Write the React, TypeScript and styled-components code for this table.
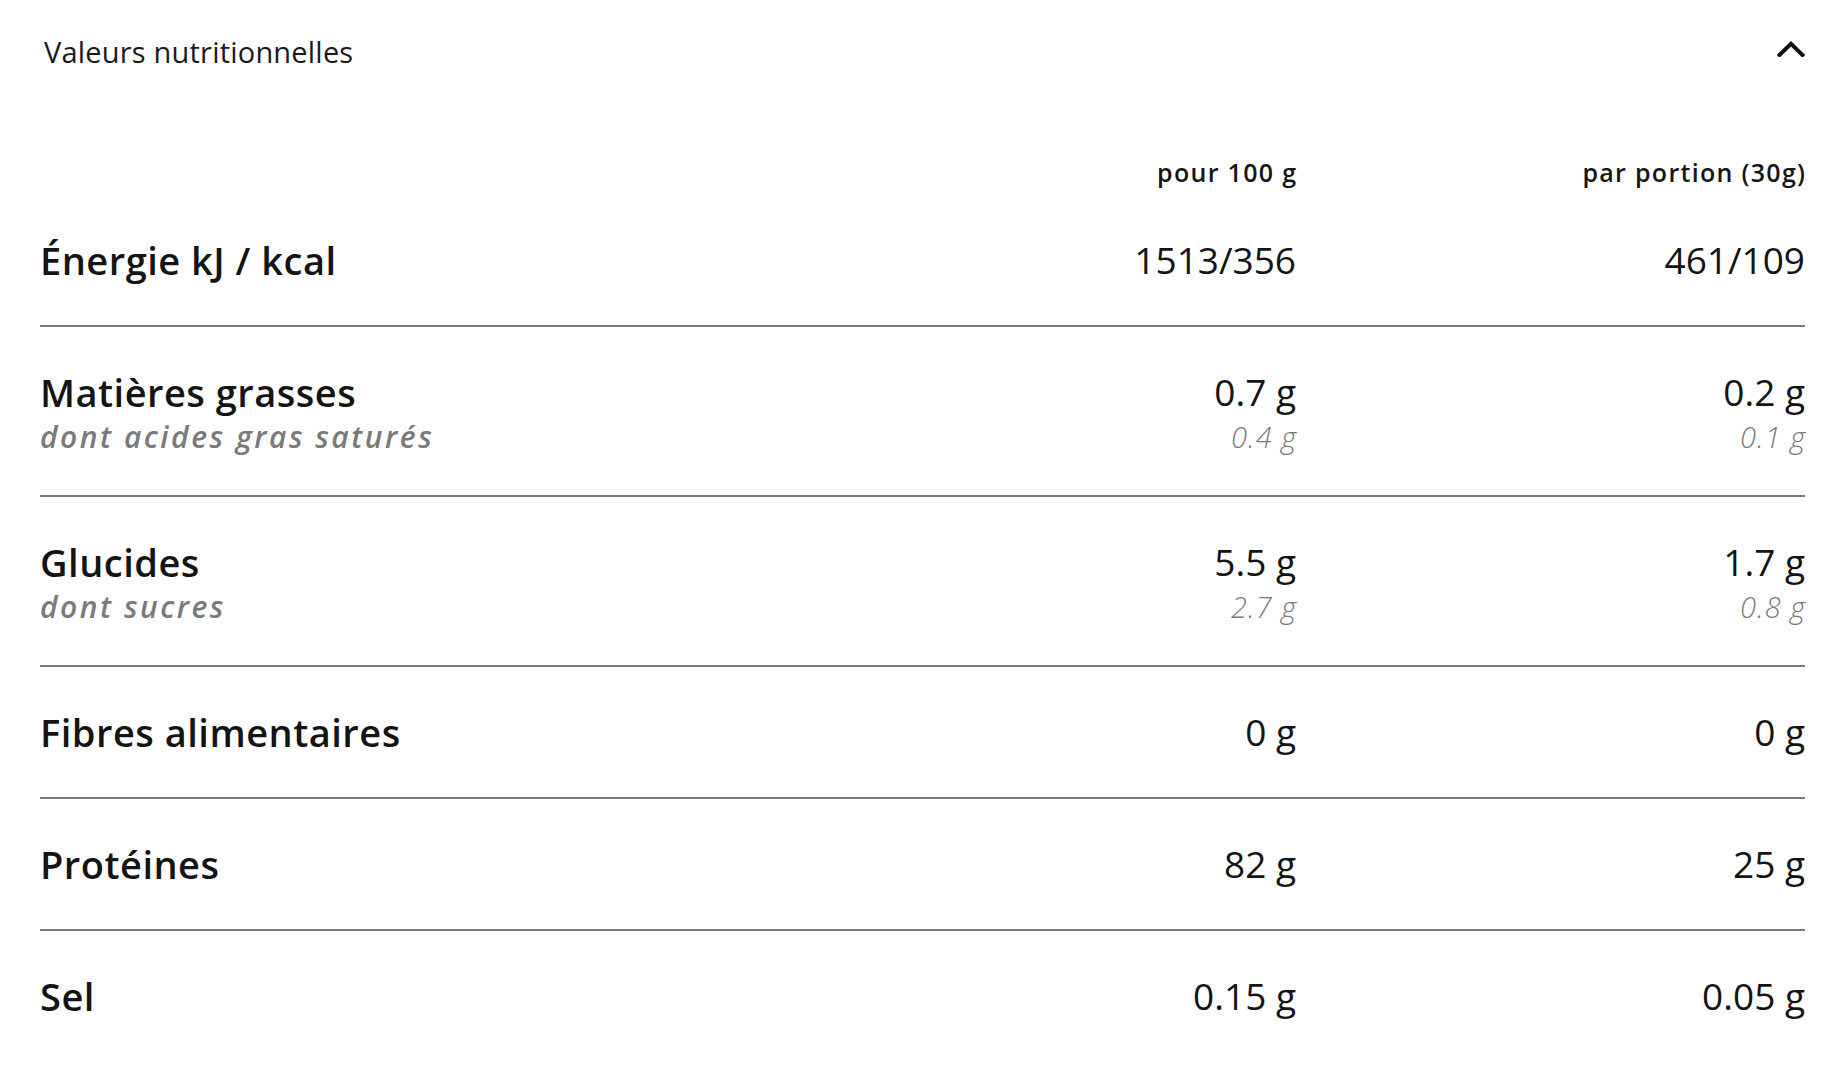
import React from "react";
import styled, { createGlobalStyle } from "styled-components";

const GlobalStyle = createGlobalStyle`
  html, body {
    margin: 0;
    padding: 0;
    background: #ffffff;
  }
  body {
    font-family: "Open Sans", "Liberation Sans", Arial, sans-serif;
    color: #141414;
    -webkit-font-smoothing: antialiased;
  }
`;

const Panel = styled.section`
  padding: 0 41px 18px 40px;
  background: #fff;
`;

const Header = styled.button`
  display: flex;
  align-items: center;
  justify-content: space-between;
  width: 100%;
  height: 102px;
  padding: 0 0 0 4px;
  border: none;
  background: transparent;
  cursor: pointer;
  font-family: inherit;
`;

const Title = styled.span`
  font-size: 29px;
  font-weight: 400;
  color: #1a1a1a;
  letter-spacing: 0.2px;
`;

const Chevron = styled.svg`
  width: 28px;
  height: 16px;
  margin-bottom: 4px;
  display: block;
`;

const Grid = styled.div`
  display: grid;
  grid-template-columns: 1fr 420px 509px;
  align-items: start;
`;

const ColHeads = styled(Grid)`
  margin-top: 55px;
  height: 30px;
  padding-bottom: 8px;
  align-items: center;
`;

const ColHead = styled.span<{ $col: number }>`
  grid-column: ${(p) => p.$col};
  text-align: right;
  font-size: 25px;
  font-weight: 600;
  line-height: 30px;
  letter-spacing: 1.3px;
  margin-right: -1.3px;
  color: #161616;
`;

const Row = styled(Grid)<{ $last?: boolean }>`
  padding: 42px 0;
  border-bottom: ${(p) => (p.$last ? "none" : "2px solid #7b7b7b")};
`;

const Cell = styled.div<{ $align?: "left" | "right" }>`
  display: flex;
  flex-direction: column;
  align-items: ${(p) => (p.$align === "right" ? "flex-end" : "flex-start")};
`;

const Label = styled.span`
  font-size: 38px;
  font-weight: 600;
  line-height: 46px;
  letter-spacing: 0.5px;
  color: #141414;
`;

const SubLabel = styled.span`
  margin-top: 6px;
  font-size: 30px;
  font-weight: 600;
  font-style: italic;
  line-height: 32px;
  letter-spacing: 2.5px;
  color: #7a7a7a;
`;

const Value = styled.span`
  font-size: 37px;
  font-weight: 400;
  line-height: 46px;
  color: #141414;
`;

const SubValue = styled.span`
  margin-top: 6px;
  font-size: 29px;
  font-weight: 300;
  font-style: italic;
  line-height: 32px;
  letter-spacing: 1px;
  margin-right: -1px;
  color: #7a7a7a;
`;

type Nutrient = {
  label: string;
  per100: string;
  perPortion: string;
  sub?: { label: string; per100: string; perPortion: string };
};

const rows: Nutrient[] = [
  { label: "Énergie kJ / kcal", per100: "1513/356", perPortion: "461/109" },
  {
    label: "Matières grasses",
    per100: "0.7 g",
    perPortion: "0.2 g",
    sub: { label: "dont acides gras saturés", per100: "0.4 g", perPortion: "0.1 g" },
  },
  {
    label: "Glucides",
    per100: "5.5 g",
    perPortion: "1.7 g",
    sub: { label: "dont sucres", per100: "2.7 g", perPortion: "0.8 g" },
  },
  { label: "Fibres alimentaires", per100: "0 g", perPortion: "0 g" },
  { label: "Protéines", per100: "82 g", perPortion: "25 g" },
  { label: "Sel", per100: "0.15 g", perPortion: "0.05 g" },
];

export default function App() {
  return (
    <>
      <GlobalStyle />
      <Panel>
        <Header type="button" aria-expanded="true">
          <Title>Valeurs nutritionnelles</Title>
          <Chevron viewBox="0 0 28 16" aria-hidden="true">
            <polyline
              points="2.5,14 14,2.8 25.5,14"
              fill="none"
              stroke="#111"
              strokeWidth="4"
              strokeLinecap="square"
              strokeLinejoin="miter"
            />
          </Chevron>
        </Header>
        <ColHeads>
          <ColHead $col={2}>pour 100 g</ColHead>
          <ColHead $col={3}>par portion (30g)</ColHead>
        </ColHeads>
        {rows.map((r, i) => (
          <Row key={r.label} $last={i === rows.length - 1}>
            <Cell>
              <Label>{r.label}</Label>
              {r.sub && <SubLabel>{r.sub.label}</SubLabel>}
            </Cell>
            <Cell $align="right">
              <Value>{r.per100}</Value>
              {r.sub && <SubValue>{r.sub.per100}</SubValue>}
            </Cell>
            <Cell $align="right">
              <Value>{r.perPortion}</Value>
              {r.sub && <SubValue>{r.sub.perPortion}</SubValue>}
            </Cell>
          </Row>
        ))}
      </Panel>
    </>
  );
}
